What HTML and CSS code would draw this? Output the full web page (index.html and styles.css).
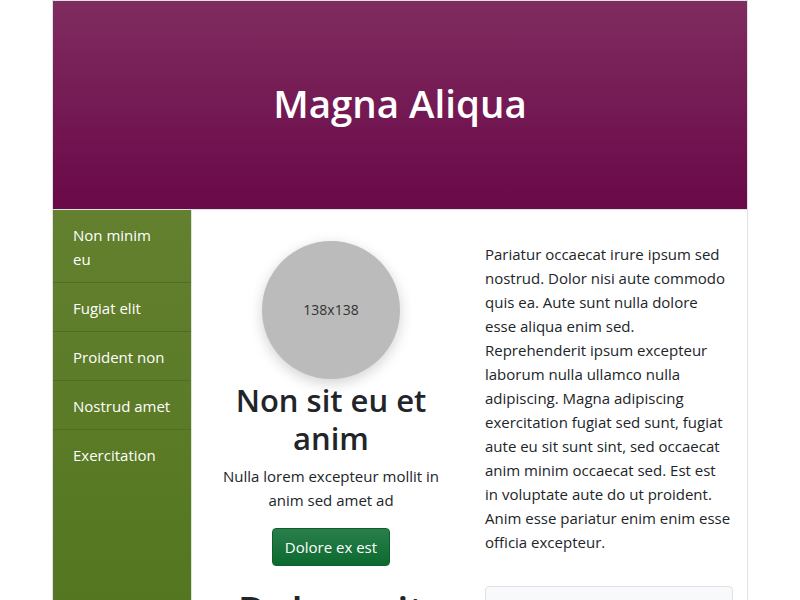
FILE: index.html
```html
<!DOCTYPE html>
<html lang="en">
<head>
<meta charset="utf-8">
<title>Magna Aliqua</title>
<link rel="stylesheet" href="styles.css">
</head>
<body>
<div class="page">
  <header class="masthead">
    <h1 class="masthead-title">Magna Aliqua</h1>
  </header>
  <div class="body-row">
    <nav class="sidebar">
      <a class="nav-item" href="#">Non minim eu</a>
      <a class="nav-item" href="#">Fugiat elit</a>
      <a class="nav-item" href="#">Proident non</a>
      <a class="nav-item" href="#">Nostrud amet</a>
      <a class="nav-item" href="#">Exercitation</a>
    </nav>
    <main class="content">
      <section class="col col-center">
        <div class="avatar">138x138</div>
        <h2 class="feature-title">Non sit eu et anim</h2>
        <p class="feature-text">Nulla lorem excepteur mollit in anim sed amet ad</p>
        <button class="btn-green" type="button">Dolore ex est</button>
        <h2 class="big-title">Dolore sit</h2>
      </section>
      <section class="col">
        <p class="body-text">Pariatur occaecat irure ipsum sed<br>nostrud. Dolor nisi aute commodo<br>quis ea. Aute sunt nulla dolore<br>esse aliqua enim sed.<br>Reprehenderit ipsum excepteur<br>laborum nulla ullamco nulla<br>adipiscing. Magna adipiscing<br>exercitation fugiat sed sunt, fugiat<br>aute eu sit sunt sint, sed occaecat<br>anim minim occaecat sed. Est est<br>in voluptate aute do ut proident.<br>Anim esse pariatur enim enim esse<br>officia excepteur.</p>
        <div class="card">&nbsp;</div>
      </section>
    </main>
  </div>
</div>
</body>
</html>
```

FILE: styles.css
```css
* { box-sizing: border-box; }
html, body { margin: 0; padding: 0; background: #fff; }
body {
  font-family: "Open Sans", "Noto Sans", sans-serif;
  font-size: 15px;
  line-height: 24px;
  color: #212529;
}
.page {
  width: 696px;
  margin: 0 auto;
  border: 1px solid #dee2e6;
  border-bottom: none;
  min-height: 600px;
  display: flex;
  flex-direction: column;
}
.masthead {
  height: 209px;
  padding-bottom: 4px;
  background: linear-gradient(to bottom, #7f2c60, #6a0848);
  border-bottom: 1px solid #dee2e6;
  display: flex;
  align-items: center;
  justify-content: center;
}
.masthead-title {
  margin: 0;
  color: #fff;
  font-size: 38.5px;
  font-weight: 600;
  line-height: 46px;
}
.body-row {
  flex: 1;
  display: flex;
}
.sidebar {
  width: 139px;
  flex: none;
  background: linear-gradient(to bottom, #63802f, #52751e);
  border-right: 1px solid #dee2e6;
  display: flex;
  flex-direction: column;
}
.nav-item {
  display: block;
  padding: 13px 20px 11px;
  color: #fff;
  text-decoration: none;
  font-size: 15px;
  line-height: 24px;
  border-bottom: 1px solid #4f6d25;
}
.nav-item:last-child { border-bottom: none; }
.content {
  flex: 1;
  display: grid;
  grid-template-columns: 1fr 1fr;
  column-gap: 30px;
  padding: 31px 14px 0 15px;
  align-items: start;
}
.col-center {
  display: flex;
  flex-direction: column;
  align-items: center;
  text-align: center;
}
.avatar {
  width: 138px;
  height: 138px;
  border-radius: 50%;
  background: #bbbbbb;
  box-shadow: 0 4px 14px rgba(0,0,0,0.18);
  display: flex;
  align-items: center;
  justify-content: center;
  font-size: 14px;
  color: #333;
}
.feature-title {
  margin: 2px 0 7px;
  font-size: 31px;
  line-height: 38px;
  font-weight: 600;
  color: #212529;
}
.feature-text {
  margin: 0 0 16px;
}
.btn-green {
  font-family: inherit;
  font-size: 15px;
  line-height: 24px;
  color: #fff;
  padding: 6px 12px;
  border: 1px solid #0e5f2d;
  border-radius: 4px;
  background: linear-gradient(to bottom, #2a7e4b, #0b6a2f);
}
.big-title {
  margin: 21px 0 0;
  font-size: 40px;
  line-height: 48px;
  font-weight: 600;
}
.body-text {
  margin: 0 0 32px;
  padding-top: 1px;
  white-space: nowrap;
}
.card {
  height: 80px;
  background: #f8f9fa;
  border: 1px solid #dee2e6;
  border-radius: 4px;
}
```
